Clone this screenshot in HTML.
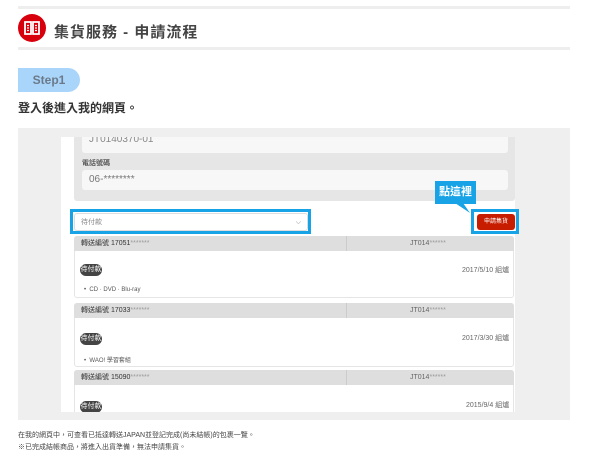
<!DOCTYPE html>
<html><head><meta charset="utf-8"><style>
*{margin:0;padding:0;box-sizing:border-box}
body{width:600px;height:464px;background:#fff;font-family:"Liberation Sans","Noto Sans CJK TC",sans-serif;color:#333;position:relative;overflow:hidden}
.a{position:absolute}
.bd{width:22px;height:12px;border-radius:6px;background:#444;color:#fff;font-size:7px;text-align:center;line-height:12px}
</style></head><body>
<div class="a" style="left:18px;top:6px;width:552px;height:3px;background:#eee"></div>
<div class="a" style="left:18px;top:14px;width:28px;height:28px;border-radius:50%;background:#d9000d"></div>
<svg class="a" style="left:22px;top:19px" width="20" height="18" viewBox="0 0 20 18"><path d="M3 3h6v12H3zM11 3h6v12h-6z" fill="none" stroke="#fff" stroke-width="1.8"/><path d="M5 6.5h2M5 9h2M5 11.5h2M13 6.5h2M13 9h2M13 11.5h2" stroke="#fff" stroke-width="1.2"/></svg>
<div class="a" style="left:54px;top:21px;font-size:15px;color:#444;letter-spacing:1px;font-weight:bold">集貨服務 - 申請流程</div>
<div class="a" style="left:18px;top:47px;width:552px;height:3px;background:#eee"></div>
<div class="a" style="left:18px;top:68px;width:62px;height:24px;border-radius:0 12px 12px 0;background:#aad5fa;color:#6a7a8a;font-size:12px;font-weight:bold;text-align:center;line-height:24px">Step1</div>
<div class="a" style="left:18px;top:99px;font-size:12px;font-weight:bold;color:#333">登入後進入我的網頁。</div>
<div class="a" style="left:18px;top:128px;width:552px;height:292px;background:#efefef"></div>
<div class="a" style="left:61px;top:137px;width:454px;height:275px;background:#fff;overflow:hidden">
 <div class="a" style="left:13px;top:0;width:441px;height:64px;background:#e6e6e6;border-radius:0 0 3px 3px"></div>
 <div class="a" style="left:21px;top:-6px;width:426px;height:22px;background:#f7f7f7;border-radius:3px;font-size:10px;color:#888;padding:3px 7px">JT0140370-01</div>
 <div class="a" style="left:21px;top:21px;font-size:7px;font-weight:bold;color:#555">電話號碼</div>
 <div class="a" style="left:21px;top:33px;width:426px;height:20px;background:#f7f7f7;border-radius:3px;font-size:10px;color:#777;padding:4px 7px">06-********</div>
 <div class="a" style="left:13px;top:76px;width:234px;height:18px;border:1px solid #ddd;border-radius:3px;font-size:7px;color:#888;padding:4px 6px;line-height:9px">待付款<span style="float:right">⌵</span></div>
 <div class="a" style="left:416px;top:77px;width:38px;height:16px;background:#c81c00;border-radius:3px;color:#fff;font-size:6px;text-align:center;line-height:16px">申請集貨</div>
</div>
<div class="a" style="left:70px;top:209px;width:241px;height:25px;border:3px solid #17a3e6"></div>
<div class="a" style="left:471px;top:209px;width:48px;height:25px;border:3px solid #17a3e6"></div>
<div class="a" style="left:435px;top:181px;width:41px;height:23px;background:#17a3e6;color:#fff;font-size:11px;font-weight:bold;text-align:center;line-height:23px">點這裡</div>
<svg class="a" style="left:455px;top:203px" width="16" height="10"><path d="M0 0L15 10L8 0Z" fill="#17a3e6"/></svg>
<div class="a" style="left:74px;top:236px;width:440px;height:62px;border:1px solid #e5e5e5;border-radius:3px;background:#fff"></div>
<div class="a" style="left:74px;top:236px;width:440px;height:15px;background:#dedede;border-radius:3px 3px 0 0;font-size:7px;color:#333;line-height:15px"><span style="padding-left:7px">轉送編號 17051<span style="color:#999">*******</span></span><span class="a" style="left:272px;top:0;width:1px;height:15px;background:#ccc"></span><span class="a" style="left:336px;top:0;color:#666">JT014<span style="color:#999">******</span></span></div>
<div class="a bd" style="left:80px;top:264px">待付款</div>
<div class="a" style="left:462px;top:265px;font-size:7px;color:#666">2017/5/10 組爐</div>
<div class="a" style="left:84px;top:287px;font-size:6px;color:#555">•&nbsp; CD · DVD · Blu-ray</div>

<div class="a" style="left:74px;top:303px;width:440px;height:64px;border:1px solid #e5e5e5;border-radius:3px;background:#fff"></div>
<div class="a" style="left:74px;top:303px;width:440px;height:15px;background:#dedede;border-radius:3px 3px 0 0;font-size:7px;color:#333;line-height:15px"><span style="padding-left:7px">轉送編號 17033<span style="color:#999">*******</span></span><span class="a" style="left:272px;top:0;width:1px;height:15px;background:#ccc"></span><span class="a" style="left:336px;top:0;color:#666">JT014<span style="color:#999">******</span></span></div>
<div class="a bd" style="left:80px;top:333px">待付款</div>
<div class="a" style="left:462px;top:333px;font-size:7px;color:#666">2017/3/30 組爐</div>
<div class="a" style="left:84px;top:355px;font-size:6px;color:#555">•&nbsp; WAO! 學習套組</div>

<div class="a" style="left:74px;top:370px;width:440px;height:42px;border:1px solid #e5e5e5;border-bottom:none;border-radius:3px 3px 0 0;background:#fff"></div>
<div class="a" style="left:74px;top:370px;width:440px;height:15px;background:#dedede;border-radius:3px 3px 0 0;font-size:7px;color:#333;line-height:15px"><span style="padding-left:7px">轉送編號 15090<span style="color:#999">*******</span></span><span class="a" style="left:272px;top:0;width:1px;height:15px;background:#ccc"></span><span class="a" style="left:336px;top:0;color:#666">JT014<span style="color:#999">******</span></span></div>
<div class="a" style="left:80px;top:399px;width:22px;height:13px;overflow:hidden"><div class="bd" style="margin-top:2px">待付款</div></div>
<div class="a" style="left:466px;top:400px;font-size:7px;color:#666">2015/9/4 組爐</div>

<div class="a" style="left:18px;top:430px;font-size:7px;color:#444;line-height:12px">在我的網頁中，可查看已抵達轉送JAPAN並登記完成(尚未結帳)的包裹一覽。<br>※已完成結帳商品，將進入出貨準備，無法申請集貨。</div>
</body></html>
